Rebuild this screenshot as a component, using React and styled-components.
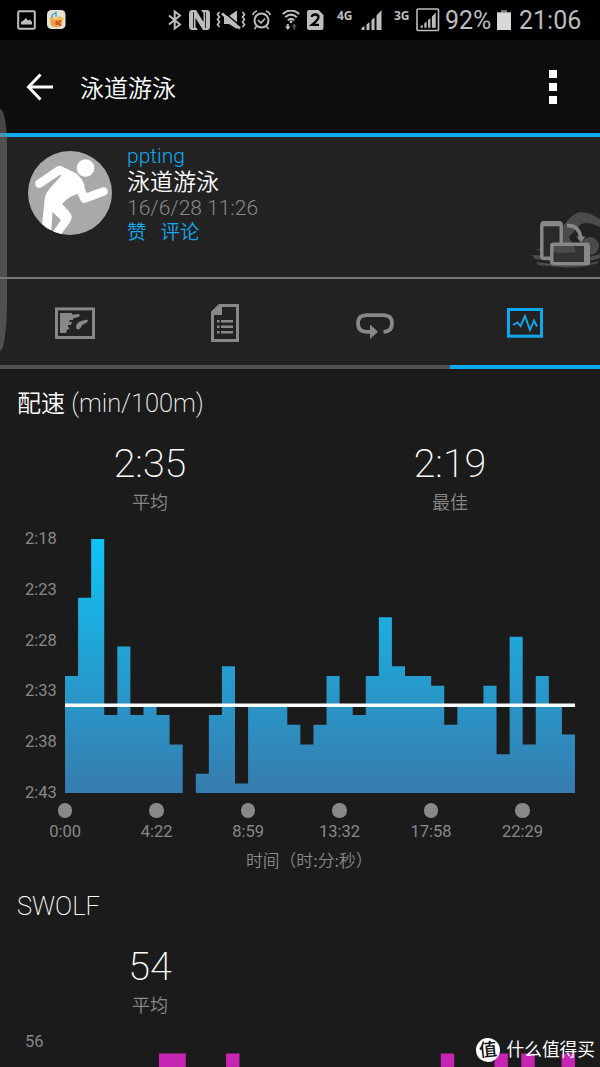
import React from 'react'
import styled, { createGlobalStyle } from 'styled-components'

const BLUE = '#11a9ed'
const GREY = '#888'

const paceBars = [
    12, 20, 26, 8, 15, 8, 9, 8, 5, 0, 2, 8, 13, 1, 9, 9, 9, 7, 5, 7,
    12, 9, 8, 12, 18, 13, 12, 12, 11, 7, 9, 9, 11, 4, 16, 5, 12, 9, 6,
]
const paceLabels = ['2:18', '2:23', '2:28', '2:33', '2:38', '2:43']
const timeLabels = ['0:00', '4:22', '8:59', '13:32', '17:58', '22:29']
const swolfBars = Array.from({ length: 38 }, (_, i) => ([7, 8, 12, 28, 32, 34, 37].includes(i) ? 21 : 0))

const BarChart = ({ id, bars, max, from, to, average }) => {
    const width = 510
    const height = 254.3
    const step = width / bars.length
    let d = `M0 ${height}`
    bars.forEach((v, i) => {
        d += `V${height - (v / max) * height}H${(i + 1) * step}`
    })
    d += `V${height}Z`

    return (
        <Plot width={width} height={height} viewBox={`0 0 ${width} ${height}`}>
            <defs>
                <linearGradient id={id} gradientUnits="userSpaceOnUse" x1="0" y1="0" x2="0" y2={height}>
                    <stop offset="0" stopColor={from} />
                    <stop offset="1" stopColor={to} />
                </linearGradient>
            </defs>
            <path d={d} fill={`url(#${id})`} />
            {average && <path d={`M0 ${average}H${width}`} stroke="#fff" strokeWidth="3.4" />}
        </Plot>
    )
}

const SignalBars = () => (
    <path d="M0 20V18L3 16V20ZM5 20V14.5L8 12V20ZM10 20V10L13 7.5V20ZM15 20V5.5L20 0V20Z" />
)

const StatusBar = () => (
    <Status>
        <StatusIcon $gap={17} width="19" height="20" viewBox="0 0 19 20">
            <rect x="1.2" y="1.2" width="16.6" height="17.6" rx="1.2" fill="none" stroke="currentColor" strokeWidth="2" />
            <path d="M4 14.5V12L7 10L9 8L11 10.5L13 9.5L15 12V14.5Z" />
        </StatusIcon>
        <StatusIcon $gap={11} width="19" height="20" viewBox="0 0 19 20">
            <rect width="18.5" height="19" rx="4.5" fill="#e6dfd2" />
            <path d="M3 8L9 10L16 8L14.5 16L9 17.5L4 15.5Z" fill="#e9a33c" />
            <path d="M2 9L5 6.5L9 9L12 6L17 8L15 11L9 10Z" fill="#f2bd55" />
            <path d="M5 5L9 2.5V7M5 5V8" stroke="#2f9fc9" strokeWidth="1.3" fill="none" />
            <path d="M9.5 10.5V15M14 10.5L10.5 13L14 15.5" stroke="#d8502c" strokeWidth="1.8" fill="none" />
        </StatusIcon>
        <Spacer />
        <StatusIcon width="14" height="20" viewBox="0 0 14 20">
            <path d="M1 5.5L12 14.5L6.7 18.5V1.5L12 5.5L1 14.5" fill="none" stroke="currentColor" strokeWidth="2" />
        </StatusIcon>
        <StatusIcon $gap={7} width="21" height="20" viewBox="0 0 21 20">
            <path d="M3 0H7L14.5 12V3L12.5 1V0H18Q21 0 21 4V16Q21 20 18 20H14L6.5 8V17L8.5 19V20H3Q0 20 0 16V4Q0 0 3 0Z" />
            <path d="M4.5 2V18M16.5 2V18" stroke="#000" strokeWidth="0.8" />
        </StatusIcon>
        <StatusIcon $gap={6} width="30" height="20" viewBox="0 0 30 20">
            <path d="M3.5 2L1.5 4.5L3.5 7L1.5 9.5L3.5 12L1.5 14.5L3.5 17M26.5 2L28.5 4.5L26.5 7L28.5 9.5L26.5 12L28.5 14.5L26.5 17" fill="none" stroke="currentColor" strokeWidth="1.7" />
            <path d="M8 6H13L21 0.5V19L13 14H8Z" />
            <path d="M7 1.5L25 16.5" stroke="#000" strokeWidth="1.6" />
            <path d="M6 3.5L24 18.5" stroke="currentColor" strokeWidth="2.8" />
        </StatusIcon>
        <StatusIcon $gap={6} width="19" height="20" viewBox="0 0 19 20">
            <circle cx="9.5" cy="10.5" r="7" fill="none" stroke="currentColor" strokeWidth="2" />
            <path d="M6 10L9 13L13 8.5M0.8 5Q1.5 2 5 1M18.2 5Q17.5 2 14 1M4.5 16.5L2.5 19M14.5 16.5L16.5 19" fill="none" stroke="currentColor" strokeWidth="1.7" />
        </StatusIcon>
        <StatusIcon $gap={11} width="18" height="20" viewBox="0 0 18 20">
            <path d="M0.7 4Q9 -3 17.3 4M3.2 7.3Q9 2 14.8 7.3M5.8 10.3Q9 7.5 12.2 10.3" fill="none" stroke="currentColor" strokeWidth="2" />
            <circle cx="9" cy="11.8" r="1.4" />
            <path d="M4.8 14V16.5H3L5.8 20L8.6 16.5H6.8V14Z" />
            <path d="M11.3 19.5V16.5H9.6L12.3 13.5L15 16.5H13.3V19.5Z" fill="#555" />
        </StatusIcon>
        <StatusIcon $gap={7} width="17" height="20" viewBox="0 0 17 20">
            <path d="M2 0H11.5L16.5 5V18Q16.5 20 14.5 20H2Q0 20 0 18V2Q0 0 2 0Z" />
            <path d="M4.8 7Q5 4.5 8.2 4.5Q11.5 4.5 11.5 7.2Q11.5 9.5 5 14.8H12" fill="none" stroke="#000" strokeWidth="2.3" />
        </StatusIcon>
        <Network $gap={13}>4G</Network>
        <StatusIcon $gap={7} width="21" height="20" viewBox="0 0 20 20"><SignalBars /></StatusIcon>
        <Network $gap={12}>3G</Network>
        <StatusIcon $gap={5} width="24" height="24" viewBox="0 0 24 24">
            <rect x="1" y="1" width="21.5" height="21.5" rx="1" fill="none" stroke="currentColor" strokeWidth="1.6" />
            <g transform="translate(4.5 4.5) scale(0.76)"><SignalBars /></g>
        </StatusIcon>
        <StatusText $gap={5} $width={47}>92%</StatusText>
        <StatusIcon $gap={5} width="14" height="20" viewBox="0 0 14 20">
            <path d="M4 0H10V2.5H4Z" fill="#777" />
            <path d="M0 2.3H14V20H0Z" fill="#d8d8d8" />
        </StatusIcon>
        <StatusText $gap={8} $width={81}>21:06</StatusText>
    </Status>
)

const Runner = () => (
    <Avatar width="84" height="84" viewBox="0 0 84 84">
        <clipPath id="round"><circle cx="42" cy="42" r="42" /></clipPath>
        <g clipPath="url(#round)">
            <rect width="84" height="84" fill="#a9a9a9" />
            <circle cx="57.5" cy="17" r="8.8" fill="#fff" />
            <path d="M11.5 32.5L31.5 19L46 26L56.5 47.5L75.5 40.5" fill="none" stroke="#fff" strokeWidth="8.6" strokeLinecap="round" strokeLinejoin="round" />
            <path d="M31 15L46 22Q57 27 57 40L53 42Q42 44 34 53L41.5 61Q45.5 66 42 71L32 85L25 80.5L33 69L24.5 61L23 84H13L16.5 50Q17 42 23 36L33 25Z" fill="#fff" />
        </g>
    </Avatar>
)

const Rotate = () => (
    <RotateIcon width="68" height="56" viewBox="0 0 68 56">
        <g fill="#4b4b4b">
            <path d="M3 38Q18 36 27 21Q38 1 49 0Q59 1 68 7V15Q56 9 49 12L37 25L44 40Q22 41 3 38Z" />
            <circle cx="58" cy="34" r="9" />
            <path d="M0 43Q14 43 30 47Q46 49 68 42V46Q48 53 28 51Q12 48 3 47ZM4 50Q20 52 34 53Q50 54 66 49V51Q48 57 28 55Q14 54 6 53Z" />
        </g>
        <path d="M11 13H28V31H18V45H11Z" fill="#2a2a2a" />
        <path d="M18 31H58V54H18Z" fill="#333" />
        <path d="M21 40Q34 42 44 40L42 34H21Z" fill="#4b4b4b" />
        <g fill="none" stroke="#888" strokeWidth="3.4">
            <path d="M18 46.3H12Q9.8 46.3 9.8 44V13Q9.8 10.8 12 10.8H27Q29.2 10.8 29.2 13V31" />
            <path d="M9 12.5H29M16 11.5H23" />
            <rect x="19.8" y="32.3" width="36.5" height="19.5" rx="1.5" />
            <path d="M54 33V51" strokeWidth="4" />
            <path d="M35 13.5Q47 13 49 26" />
        </g>
        <path d="M44.5 24.5H53.5L49 30.5Z" fill="#888" />
    </RotateIcon>
)

const App = () => {
    return (
        <Screen>
            <GlobalStyle />
            <StatusBar />
            <Header>
                <svg width="28" height="28" viewBox="0 0 28 28" fill="none" stroke="#fff" strokeWidth="3">
                    <path d="M15.5 1.5L3.5 14L15.5 26.5M3 14H28" />
                </svg>
                <Title>泳道游泳</Title>
                <More><i /><i /><i /></More>
            </Header>

            <Profile>
                <Runner />
                <Details>
                    <User>ppting</User>
                    <Activity>泳道游泳</Activity>
                    <Stamp>16/6/28 11:26</Stamp>
                    <Actions><span>赞</span><span>评论</span></Actions>
                </Details>
                <Rotate />
            </Profile>

            <Tabs>
                <Tab>
                    <svg width="40" height="38" viewBox="0 0 40 38">
                        <rect x="1.5" y="4.9" width="37" height="28.6" fill="none" stroke="currentColor" strokeWidth="3" />
                        <path d="M5 9H17V10.5H20L24 10Q26 12 23 13L18 14.5V16H14.5V18H17L16 21H13V23L15 24L12 26L11 29H5ZM21 23Q21 19 26 17L32 15.5Q34 17 31 19L27 21Q26 25 23 25.5Q21 25 21 23Z" />
                    </svg>
                </Tab>
                <Tab>
                    <svg width="28" height="38" viewBox="0 0 28 38">
                        <path d="M1.5 8.5L9 1.5H26.5V36.5H1.5Z" fill="none" stroke="currentColor" strokeWidth="3" />
                        <path d="M0 8L8 0H11V11H0ZM6 16H8.5V18.5H6ZM10 16H22V18.5H10ZM6 21.5H8.5V24H6ZM10 21.5H22V24H10ZM6 27H8.5V29.5H6ZM10 27H22V29.5H10Z" />
                    </svg>
                </Tab>
                <Tab>
                    <svg width="38" height="38" viewBox="0 0 38 38">
                        <path d="M15 27.8H10.5Q2 27.8 2 19.5Q2 11.2 10.5 11.2H27.5Q36 11.2 36 19.5Q36 27.8 27.5 27.8" fill="none" stroke="currentColor" strokeWidth="3.8" />
                        <path d="M14 20.5L22 27.8L14 35Z" />
                    </svg>
                </Tab>
                <Tab $active>
                    <svg width="36" height="38" viewBox="0 0 36 38">
                        <rect x="1.5" y="5.5" width="33" height="26.7" fill="none" stroke="currentColor" strokeWidth="3" />
                        <path d="M6 21L10.5 18.5L13.5 22L18 12L23 26L27 16.5L30 22.5" fill="none" stroke="currentColor" strokeWidth="1.9" />
                    </svg>
                </Tab>
            </Tabs>

            <Section>
                <Heading><b>配速</b> (min/100m)</Heading>
                <Stats>
                    <Stat><Value>2:35</Value><Label>平均</Label></Stat>
                    <Stat><Value>2:19</Value><Label>最佳</Label></Stat>
                </Stats>
                <Chart>
                    <YAxis>{paceLabels.map(l => <span key={l}>{l}</span>)}</YAxis>
                    <BarChart id="pace" bars={paceBars} max={26} from="#11c3f4" to="#377bae" average={166.2} />
                </Chart>
                <XAxis>
                    {timeLabels.map(l => <Tick key={l}><Dot />{l}</Tick>)}
                </XAxis>
                <Caption>时间（时:分:秒）</Caption>
            </Section>

            <Section>
                <Heading>SWOLF</Heading>
                <Stats>
                    <Stat><Value>54</Value><Label>平均</Label></Stat>
                    <Stat />
                </Stats>
                <Chart>
                    <YAxis><span>56</span></YAxis>
                    <BarChart id="swolf" bars={swolfBars} max={22} from="#cb25b5" to="#8b1b90" />
                </Chart>
            </Section>

            <EdgePanel />
            <Watermark>
                <Badge>值</Badge>
                什么值得买
            </Watermark>
        </Screen>
    )
}

const GlobalStyle = createGlobalStyle`
    body {
        margin: 0;
        background: #1b1b1b;
        overflow: hidden;
    }
`;

const Screen = styled.div`
    position: relative;
    width: 600px;
    height: 1067px;
    overflow: hidden;
    background: #1b1b1b;
    color: #fff;
    font-family: Roboto, 'Noto Sans CJK SC', sans-serif;
    font-weight: 300;
`;

const Status = styled.div`
    display: flex;
    align-items: center;
    height: 40px;
    background: #000;
    color: #bdbdbd;
`;

const StatusIcon = styled.svg`
    flex: none;
    margin-left: ${({ $gap = 0 }) => $gap}px;
    fill: currentColor;
`;

const Spacer = styled.div`
    flex: 1;
`;

const Network = styled.span`
    width: 17px;
    margin-left: ${({ $gap }) => $gap}px;
    padding-bottom: 9px;
    font: 700 12px 'Open Sans', sans-serif;
    line-height: 14px;
`;

const StatusText = styled.span`
    width: ${({ $width }) => $width}px;
    margin-left: ${({ $gap }) => $gap}px;
    padding-top: 2px;
    font-size: 25px;
    font-weight: 400;
    line-height: 38px;
`;

const Header = styled.header`
    display: flex;
    align-items: center;
    box-sizing: border-box;
    height: 97px;
    padding: 0 43px 0 25px;
    background: #0d0d0d;
    border-bottom: 4px solid ${BLUE};
`;

const Title = styled.h1`
    flex: 1;
    margin: 0 0 0 27px;
    padding-top: 4px;
    font-size: 24px;
    font-weight: 350;
    line-height: 40px;
`;

const More = styled.div`
    display: grid;
    gap: 5px;
    i {
        width: 8px;
        height: 8px;
        background: #fff;
    }
`;

const Profile = styled.section`
    display: flex;
    box-sizing: border-box;
    height: 142px;
    padding-left: 28px;
    background: #222;
    border-bottom: 2px solid #777;
`;

const Avatar = styled.svg`
    margin: 14px 15px 0 0;
`;

const Details = styled.div`
    flex: 1;
    padding-top: 6px;
    font-size: 21px;
    line-height: 26px;
`;

const User = styled.div`
    color: ${BLUE};
`;

const Activity = styled.div`
    padding-top: 1px;
    font-size: 23px;
    font-weight: 350;
`;

const Stamp = styled.div`
    color: ${GREY};
    line-height: 25px;
`;

const Actions = styled.div`
    display: flex;
    gap: 14px;
    padding-top: 1px;
    color: ${BLUE};
    font-size: 19.5px;
    font-weight: 350;
    line-height: 22px;
`;

const RotateIcon = styled.svg`
    margin-top: 75px;
`;

const Tabs = styled.nav`
    display: grid;
    grid-template-columns: repeat(4, 1fr);
    height: 90px;
    background: #222;
`;

const Tab = styled.div`
    display: flex;
    align-items: center;
    justify-content: center;
    padding-top: 2px;
    color: ${({ $active }) => ($active ? BLUE : GREY)};
    border-bottom: 4px solid ${({ $active }) => ($active ? BLUE : '#525252')};
    > svg {
        fill: currentColor;
    }
`;

const Section = styled.section`
    height: 489px;
    padding-top: 14px;
`;

const Heading = styled.h2`
    height: 40px;
    margin: 0 0 16px 17px;
    font-size: 25.5px;
    font-weight: 200;
    line-height: 40px;
    b {
        font-size: 24px;
        font-weight: 350;
    }
`;

const Stats = styled.div`
    display: grid;
    grid-template-columns: 1fr 1fr;
`;

const Stat = styled.div`
    text-align: center;
`;

const Value = styled.div`
    font-size: 39.5px;
    font-weight: 200;
    line-height: 50px;
`;

const Label = styled.div`
    color: ${GREY};
    font-size: 18px;
    font-weight: 350;
    line-height: 28px;
`;

const Chart = styled.div`
    display: flex;
    height: 254px;
    margin-top: 22px;
`;

const YAxis = styled.div`
    display: flex;
    flex-direction: column;
    justify-content: space-between;
    width: 40px;
    height: 274px;
    margin-top: -10px;
    padding-left: 25px;
    color: ${GREY};
    font-size: 16.5px;
    font-weight: 400;
    line-height: 20px;
`;

const Plot = styled.svg`
    display: block;
`;

const XAxis = styled.div`
    display: flex;
    padding: 10px 0 0 19.3px;
`;

const Tick = styled.div`
    display: flex;
    flex-direction: column;
    align-items: center;
    gap: 4px;
    width: 91.5px;
    color: ${GREY};
    font-size: 16.5px;
    font-weight: 400;
    line-height: 20px;
`;

const Dot = styled.span`
    width: 14.5px;
    height: 14.5px;
    border-radius: 50%;
    background: ${GREY};
`;

const Caption = styled.div`
    padding: 5px 0 0 246px;
    color: ${GREY};
    font-family: 'Noto Sans CJK SC', sans-serif;
    font-size: 16.8px;
    font-weight: 350;
    line-height: 26px;
`;

const EdgePanel = styled.div`
    position: absolute;
    top: 109px;
    left: 0;
    width: 7px;
    height: 242px;
    border-radius: 0 7px 7px 0 / 0 34px 50px 0;
    background: rgba(125, 125, 125, 0.5);
`;

const Watermark = styled.div`
    position: absolute;
    right: 5px;
    bottom: 5px;
    display: flex;
    align-items: center;
    gap: 7px;
    font-size: 17.7px;
    font-weight: 400;
    line-height: 24px;
`;

const Badge = styled.span`
    width: 24px;
    height: 24px;
    border-radius: 50%;
    background: #fff;
    color: #111;
    font-size: 18px;
    font-weight: 500;
    line-height: 23px;
    text-align: center;
    transform: rotate(-6deg);
`;

export default App
